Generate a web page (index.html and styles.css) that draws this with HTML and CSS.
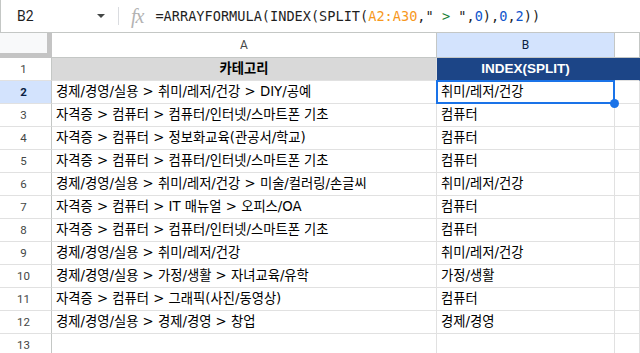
FILE: index.html
```html
<!DOCTYPE html>
<html lang="ko">
<head>
    <meta charset="UTF-8">
    <title>Sheet</title>
    <link rel="stylesheet" href="styles.css">
</head>
<body>
    <!-- Formula bar -->
    <div class="formula-bar">
        <div class="name-box">
            <span class="cell-name">B2</span>
            <span class="caret"></span>
        </div>
        <div class="divider"></div>
        <span class="fx">fx</span>
        <div class="formula">=ARRAYFORMULA(INDEX(SPLIT(<span class="ref">A2:A30</span>,"<span class="str"> &gt; </span>",<span class="num">0</span>),<span class="num">0</span>,<span class="num">2</span>))</div>
    </div>

    <!-- Grid -->
    <div class="sheet">
        <div class="row col-heads">
            <div class="corner"></div>
            <div class="col-head">A</div>
            <div class="col-head active">B</div>
            <div class="col-head"></div>
        </div>

        <div class="row">
            <div class="row-head">1</div>
            <div class="cell title-a">카테고리</div>
            <div class="cell title-b">INDEX(SPLIT)</div>
            <div class="cell title-b"></div>
        </div>
        <div class="row">
            <div class="row-head active">2</div>
            <div class="cell">경제/경영/실용 &gt; 취미/레저/건강 &gt; DIY/공예</div>
            <div class="cell selected">취미/레저/건강<span class="handle"></span></div>
            <div class="cell"></div>
        </div>
        <div class="row">
            <div class="row-head">3</div>
            <div class="cell">자격증 &gt; 컴퓨터 &gt; 컴퓨터/인터넷/스마트폰 기초</div>
            <div class="cell">컴퓨터</div>
            <div class="cell"></div>
        </div>
        <div class="row">
            <div class="row-head">4</div>
            <div class="cell">자격증 &gt; 컴퓨터 &gt; 정보화교육(관공서/학교)</div>
            <div class="cell">컴퓨터</div>
            <div class="cell"></div>
        </div>
        <div class="row">
            <div class="row-head">5</div>
            <div class="cell">자격증 &gt; 컴퓨터 &gt; 컴퓨터/인터넷/스마트폰 기초</div>
            <div class="cell">컴퓨터</div>
            <div class="cell"></div>
        </div>
        <div class="row">
            <div class="row-head">6</div>
            <div class="cell">경제/경영/실용 &gt; 취미/레저/건강 &gt; 미술/컬러링/손글씨</div>
            <div class="cell">취미/레저/건강</div>
            <div class="cell"></div>
        </div>
        <div class="row">
            <div class="row-head">7</div>
            <div class="cell">자격증 &gt; 컴퓨터 &gt; IT 매뉴얼 &gt; 오피스/OA</div>
            <div class="cell">컴퓨터</div>
            <div class="cell"></div>
        </div>
        <div class="row">
            <div class="row-head">8</div>
            <div class="cell">자격증 &gt; 컴퓨터 &gt; 컴퓨터/인터넷/스마트폰 기초</div>
            <div class="cell">컴퓨터</div>
            <div class="cell"></div>
        </div>
        <div class="row">
            <div class="row-head">9</div>
            <div class="cell">경제/경영/실용 &gt; 취미/레저/건강</div>
            <div class="cell">취미/레저/건강</div>
            <div class="cell"></div>
        </div>
        <div class="row">
            <div class="row-head">10</div>
            <div class="cell">경제/경영/실용 &gt; 가정/생활 &gt; 자녀교육/유학</div>
            <div class="cell">가정/생활</div>
            <div class="cell"></div>
        </div>
        <div class="row">
            <div class="row-head">11</div>
            <div class="cell">자격증 &gt; 컴퓨터 &gt; 그래픽(사진/동영상)</div>
            <div class="cell">컴퓨터</div>
            <div class="cell"></div>
        </div>
        <div class="row">
            <div class="row-head">12</div>
            <div class="cell">경제/경영/실용 &gt; 경제/경영 &gt; 창업</div>
            <div class="cell">경제/경영</div>
            <div class="cell"></div>
        </div>
        <div class="row">
            <div class="row-head">13</div>
            <div class="cell"></div>
            <div class="cell"></div>
            <div class="cell"></div>
        </div>
    </div>
</body>
</html>
```

FILE: styles.css
```css
* {
    margin: 0;
    padding: 0;
    box-sizing: border-box;
}

body {
    font-family: "DejaVu Sans", "Noto Sans CJK KR", sans-serif;
    background: #ffffff;
    color: #000000;
    width: 640px;
    height: 353px;
    overflow: hidden;
}

/* Formula bar */
.formula-bar {
    height: 33px;
    display: flex;
    align-items: center;
    border-bottom: 1px solid #c4c7c5;
    border-left: 1px solid #c4c7c5;
}

.name-box {
    width: 117px;
    display: flex;
    align-items: center;
    justify-content: space-between;
    padding: 0 13px 0 16px;
}

.cell-name {
    font-family: Roboto, sans-serif;
    font-size: 14px;
    color: #1f1f1f;
}

.caret {
    width: 0;
    height: 0;
    border-left: 4px solid transparent;
    border-right: 4px solid transparent;
    border-top: 4px solid #444746;
}

.divider {
    width: 1px;
    height: 18px;
    background: #dadce0;
}

.fx {
    font-family: "Liberation Serif", serif;
    font-style: italic;
    font-size: 20px;
    color: #b3b3b3;
    margin: 0 12px 0 12px;
    letter-spacing: -1px;
}

.formula {
    font-family: "DejaVu Sans Mono", monospace;
    font-size: 13.6px;
    color: #1f1f1f;
    white-space: pre;
}

.formula .ref {
    color: #f7981d;
}

.formula .str {
    color: #188038;
}

.formula .num {
    color: #1155cc;
}

/* Sheet grid */
.row {
    display: grid;
    grid-template-columns: 52px 385px 178px 25px;
    height: 23px;
}

.col-heads {
    height: 25px;
}

.corner {
    background: #f8f9fa;
    border-right: 5px solid #c4c4c4;
    border-bottom: 5px solid #c4c4c4;
}

.col-head {
    font-family: Roboto, sans-serif;
    font-size: 12px;
    color: #444746;
    display: flex;
    align-items: center;
    justify-content: center;
    border-right: 1px solid #c4c7c5;
    border-bottom: 1px solid #c4c7c5;
}

.col-head.active {
    background: #d3e3fd;
    color: #0b1f44;
}

.row-head {
    font-family: Roboto, sans-serif;
    font-size: 11.5px;
    color: #444746;
    display: flex;
    align-items: center;
    justify-content: center;
    padding-right: 4px;
    border-right: 1px solid #c4c7c5;
    border-bottom: 1px solid #e1e1e1;
}

.row-head.active {
    background: #d3e3fd;
    color: #0b1f44;
    font-weight: 700;
}

.cell {
    font-size: 13.3px;
    line-height: 22px;
    padding: 0 4px;
    white-space: nowrap;
    overflow: hidden;
    border-right: 1px solid #e1e1e1;
    border-bottom: 1px solid #e1e1e1;
}

.title-a {
    background: #d9d9d9;
    font-weight: 700;
    text-align: center;
}

.title-b {
    font-family: "Liberation Sans", sans-serif;
    font-size: 13.5px;
    background: #1c4587;
    color: #ffffff;
    font-weight: 700;
    text-align: center;
    border-right-color: #1c4587;
}

/* Active cell */
.selected {
    position: relative;
    overflow: visible;
}

.selected::after {
    content: '';
    position: absolute;
    top: -1px;
    left: -1px;
    right: -1px;
    bottom: -1px;
    border: 2px solid #1a73e8;
}

.handle {
    position: absolute;
    right: -5px;
    bottom: -5px;
    width: 9px;
    height: 9px;
    border-radius: 50%;
    background: #1a73e8;
    z-index: 2;
}
```
